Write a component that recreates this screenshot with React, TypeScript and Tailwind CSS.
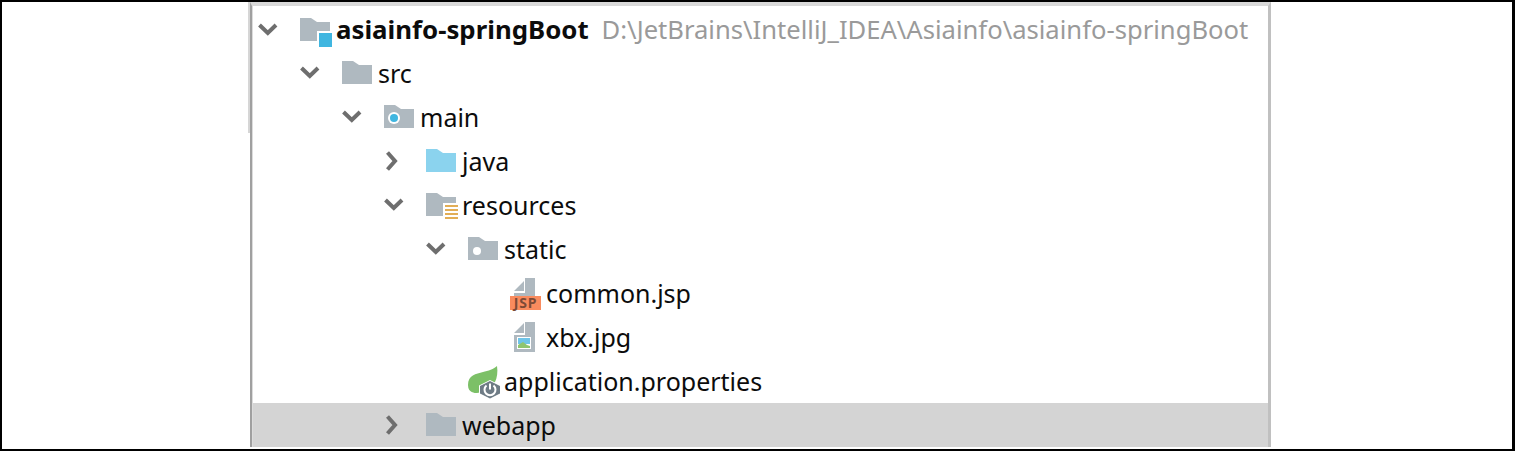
const font = "font-['Noto_Sans','Open_Sans',sans-serif]";

function Chevron({ open }: { open: boolean }) {
  return (
    <svg width="24" height="24" viewBox="0 0 24 24" fill="none" stroke="#6e6e6e" strokeWidth="4">
      {open ? <path d="M3.500 7 11.800 15 20 7" /> : <path d="M5.500 3.500 13 12l-7.500 8.500" />}
    </svg>
  );
}

const folderPath = "M0 0h11l6 4h13v19H0z";

function Folder({ color = "#afb9c0", children }: { color?: string; children?: React.ReactNode }) {
  return (
    <svg width="34" height="34" viewBox="0 0 34 34" className="my-[-1px]">
      <path transform="translate(0 5)" d={folderPath} fill={color} />
      {children}
    </svg>
  );
}

function ProjectIcon() {
  return (
    <Folder>
      <rect x="17" y="18" width="17" height="16" fill="#ffffff" />
      <rect x="19" y="20" width="13" height="14" fill="#40b6e0" />
    </Folder>
  );
}

function ModuleIcon() {
  return (
    <Folder>
      <circle cx="10" cy="18" r="6" fill="#ffffff" />
      <circle cx="10" cy="18" r="4" fill="#40b6e0" />
    </Folder>
  );
}

function StaticIcon() {
  return (
    <Folder>
      <circle cx="9" cy="19" r="4" fill="#ffffff" />
    </Folder>
  );
}

function ResourcesIcon() {
  return (
    <Folder>
      <rect x="17" y="15" width="17" height="19" fill="#ffffff" />
      <path d="M19 17h13v2H19zM19 21h13v2H19zM19 25h13v2H19zM19 29h13v2H19z" fill="#e2ae56" />
    </Folder>
  );
}

function JspIcon() {
  return (
    <svg width="34" height="38" viewBox="0 0 34 38">
      <g transform="translate(0 2)">
        <path d="M4 15 14 5v10zM15 2h10v18H4v-3h11z" fill="#afb9c0" />
        <rect x="0" y="20" width="31" height="14" fill="#f98b5e" />
        <text x="15.500" y="32" textAnchor="middle" fontSize="14" fontWeight="700" fontFamily="Noto Sans, sans-serif" letterSpacing="0.800" fill="#7d4a36">
          JSP
        </text>
      </g>
    </svg>
  );
}

function ImageIcon() {
  return (
    <svg width="34" height="34" viewBox="0 0 34 34">
      <path d="M4 13 14 3v10zM15 2h10v30H4V15h11z" fill="#afb9c0" />
      <rect x="7" y="17" width="14" height="12" fill="#ffffff" />
      <rect x="8" y="18" width="12" height="6" fill="#6fc4e8" />
      <path d="M8 25l5-3 4 3 3 1v2H8z" fill="#8fc56f" />
    </svg>
  );
}

function SpringIcon() {
  return (
    <svg width="36" height="36" viewBox="0 0 36 36">
      <path d="M0 22C0 12 8 11 15 9c5-1 11-3 14-6 1 6 0 12-2 16-3 6-10 10-18 11-2 0-9 0-9-8z" fill="#7cc067" />
      <path d="M22 17l11 5.500v8L22 36l-11-5.500v-8z" fill="#ffffff" />
      <path d="M22 18l10 5v7.500L22 35.500l-10-5V23z" fill="#6e7b85" />
      <path d="M18.500 22.500a5.500 5.500 0 1 0 7 0" fill="none" stroke="#ffffff" strokeWidth="2" />
      <path d="M22 20.500v6" stroke="#ffffff" strokeWidth="2" />
    </svg>
  );
}

type Row = {
  depth: number;
  chevron?: "open" | "closed";
  icon: React.ReactNode;
  label: string;
  selected?: boolean;
};

const rows: Row[] = [
  { depth: 1, chevron: "open", icon: <Folder />, label: "src" },
  { depth: 2, chevron: "open", icon: <ModuleIcon />, label: "main" },
  { depth: 3, chevron: "closed", icon: <Folder color="#8bd3ee" />, label: "java" },
  { depth: 3, chevron: "open", icon: <ResourcesIcon />, label: "resources" },
  { depth: 4, chevron: "open", icon: <StaticIcon />, label: "static" },
  { depth: 5, icon: <JspIcon />, label: "common.jsp" },
  { depth: 5, icon: <ImageIcon />, label: "xbx.jpg" },
  { depth: 4, icon: <SpringIcon />, label: "application.properties" },
  { depth: 3, chevron: "closed", icon: <Folder />, label: "webapp", selected: true },
];

// 每级缩进 42px
function TreeRow({ row }: { row: Row }) {
  return (
    <div className={`flex h-[44px] shrink-0 items-center ${row.selected ? "bg-[#d4d4d4]" : ""}`}>
      <div style={{ width: row.depth * 42 }} className="shrink-0" />
      <div className="flex w-[47px] shrink-0 justify-start pl-[3px]">
        {row.chevron && <Chevron open={row.chevron === "open"} />}
      </div>
      <div className="flex w-[36px] shrink-0 items-center justify-start">{row.icon}</div>
      <span className="text-[25px] leading-none text-[#0c0c0c]">{row.label}</span>
    </div>
  );
}

export default function App() {
  return (
    <div className={`h-[451px] w-[1515px] overflow-hidden bg-white ${font}`}>
      <div className="h-full border-t-2 border-r-[3px] border-b-2 border-l-2 border-black pl-[248px] pr-[241px]">
        <div className="relative flex h-[445px] flex-col border-t-4 border-r-[3px] border-l-2 border-t-[#d9d9d9] border-r-[#c0c0c0] border-l-[#a0a0a0] pl-px">
          {/* 左边框上半段的滚动条痕迹 */}
          <div className="absolute top-[-4px] left-[-4px] h-[131px] w-[2px] bg-[#d6d6d6]" />
          <div className="absolute top-0 bottom-0 left-0 w-px bg-[#dcdcdc]" />
          <div className="flex h-[45px] shrink-0 items-center pt-[3px]">
            <div className="flex w-[47px] shrink-0 justify-start pl-[3px]">
              <Chevron open />
            </div>
            <div className="flex w-[36px] shrink-0 items-center">
              <ProjectIcon />
            </div>
            <span className="text-[25.800px] leading-none font-bold text-[#0c0c0c]">asiainfo-springBoot</span>
            <span className="ml-[13px] text-[25.600px] leading-none text-[#9a9a9a]">
              D:\JetBrains\IntelliJ_IDEA\Asiainfo\asiainfo-springBoot
            </span>
          </div>
          {rows.map((row) => (
            <TreeRow key={row.label} row={row} />
          ))}
        </div>
      </div>
    </div>
  );
}
